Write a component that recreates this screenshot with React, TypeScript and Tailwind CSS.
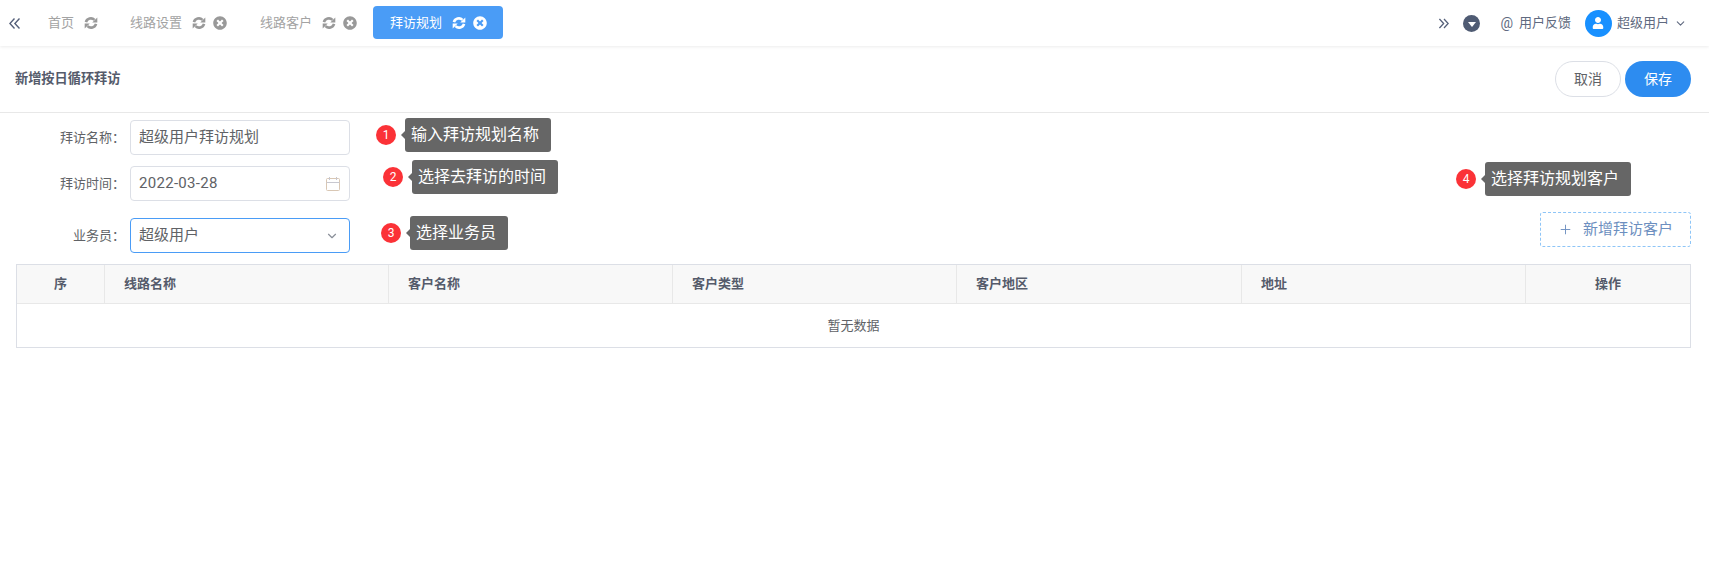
import { ChevronDown, Plus } from "lucide-react";
import { FaTimesCircle, FaUser } from "react-icons/fa";

const font = "font-['Roboto','Noto_Sans_CJK_SC',sans-serif]";

const SyncIcon = ({ className }: { className: string }) => (
  <svg viewBox="0 0 16 16" className={className} fill="currentColor">
    <path d="M2.2 7A5.9 5.9 0 0 1 12 4.4" fill="none" stroke="currentColor" strokeWidth="3" />
    <path d="M9.4 7.4h5.8V1.6z" />
    <path d="M13.8 9A5.9 5.9 0 0 1 4 11.6" fill="none" stroke="currentColor" strokeWidth="3" />
    <path d="M6.6 8.6H.8v5.8z" />
  </svg>
);

const DoubleChevron = ({ left, className }: { left?: boolean; className: string }) => (
  <svg viewBox="0 0 11 11" className={className} fill="none" stroke="#55607a" strokeWidth="1.4">
    <path d={left ? "M5.5 .5 .9 5.5l4.6 5M10.5 .5 5.9 5.5l4.6 5" : "M.5 .5l4.6 5-4.6 5M5.5 .5l4.6 5-4.6 5"} />
  </svg>
);

const Tab = ({ label, closable, width }: { label: string; closable?: boolean; width: string }) => (
  <div className={`flex h-[33px] shrink-0 items-center whitespace-nowrap text-[13px] text-[#a3a3a3] ${width}`}>
    <span className="ml-[17px]">{label}</span>
    <SyncIcon className="ml-[10px] h-[14px] w-[14px] text-[#999]" />
    {closable && <FaTimesCircle className="ml-[7px] h-[14px] w-[14px] text-[#999]" />}
  </div>
);

const Note = ({ n, text, className }: { n: number; text: string; className: string }) => (
  <div className={`absolute flex items-center ${className}`}>
    <span className="flex h-[20px] w-[20px] items-center justify-center rounded-full bg-[#fb3237] text-[12px] text-white">{n}</span>
    <span className="ml-[5px] h-0 w-0 border-y-[4px] border-r-[4px] border-y-transparent border-r-[#666]" />
    <span className="flex h-[34px] items-center rounded-[3px] bg-[#666] pl-[6px] pr-[12px] text-[16px] text-white">{text}</span>
  </div>
);

const Calendar = () => (
  <svg viewBox="0 0 16 16" className="h-[16px] w-[16px]" fill="none" stroke="#d9c7b4" strokeWidth="1">
    <rect x="1.5" y="2.5" width="13" height="12" rx="1" />
    <path d="M1.5 6.5h13M4.5 1v3M11.5 1v3" stroke="#c8c8d0" />
  </svg>
);

const Field = ({ label, children, className }: { label: string; children: React.ReactNode; className: string }) => (
  <div className={`flex items-center ${className}`}>
    <label className="mr-[5px] w-[125px] text-right text-[13px] text-[#606266]">{label}：</label>
    {children}
  </div>
);

const columns = [
  { name: "序", w: "w-[88px]", cls: "justify-center" },
  { name: "线路名称", w: "w-[284px]", cls: "pl-[19px]" },
  { name: "客户名称", w: "w-[284px]", cls: "pl-[19px]" },
  { name: "客户类型", w: "w-[284px]", cls: "pl-[19px]" },
  { name: "客户地区", w: "w-[285px]", cls: "pl-[19px]" },
  { name: "地址", w: "w-[284px]", cls: "pl-[19px]" },
  { name: "操作", w: "flex-1", cls: "justify-center" },
];

export default function App() {
  return (
    <div className={`relative h-[588px] w-[1709px] overflow-hidden bg-white ${font}`}>
      <header className="flex h-[46px] items-center shadow-[0_1px_3px_rgba(0,0,0,0.08)]">
        <DoubleChevron left className="ml-[9px] h-[11px] w-[11px]" />
        <div className="ml-[11px] flex items-center">
          <Tab label="首页" width="w-[82px]" />
          <Tab label="线路设置" closable width="w-[130px]" />
          <Tab label="线路客户" closable width="w-[130px]" />
          <div className="-mt-[1px] flex h-[33px] w-[130px] shrink-0 items-center whitespace-nowrap rounded-[4px] bg-[#4a9cf6] text-[13px] text-white">
            <span className="ml-[17px]">拜访规划</span>
            <SyncIcon className="ml-[10px] h-[14px] w-[14px]" />
            <FaTimesCircle className="ml-[7px] h-[14px] w-[14px]" />
          </div>
        </div>
        <div className="ml-auto flex items-center text-[13px] text-[#606a80]">
          <DoubleChevron className="h-[11px] w-[10px]" />
          <span className="ml-[14px] flex h-[17px] w-[17px] items-center justify-center rounded-full bg-[#4f5b73]">
            <span className="mt-[2px] h-0 w-0 border-x-[4px] border-t-[5px] border-x-transparent border-t-white" />
          </span>
          <span className="ml-[20px] text-[14px]">@</span>
          <span className="ml-[6px]">用户反馈</span>
          <span className="ml-[14px] flex h-[27px] w-[27px] items-center justify-center rounded-full bg-[#1890ff]">
            <FaUser className="h-[12px] w-[12px] text-white" />
          </span>
          <span className="ml-[5px]">超级用户</span>
          <ChevronDown className="ml-[5px] mr-[22px] h-[13px] w-[13px]" />
        </div>
      </header>

      <div className="flex h-[67px] items-center justify-between border-b border-[#e8e8e8] pl-[15px] pr-[18px]">
        <h1 className="text-[13.2px] font-bold text-[#555b6b]">新增按日循环拜访</h1>
        <div className="flex gap-[4px] text-[14px]">
          <button className="h-[36px] w-[66px] rounded-full border border-[#dcdfe6] text-[#606266]">取消</button>
          <button className="h-[36px] w-[66px] rounded-full bg-[#2d8cf0] text-white">保存</button>
        </div>
      </div>

      <div className="relative">
        <Field label="拜访名称" className="pt-[7px]">
          <div className="flex h-[35px] w-[220px] items-center rounded-[4px] border border-[#dcdfe6] px-[8px] text-[15px] text-[#606266]">超级用户拜访规划</div>
        </Field>
        <Field label="拜访时间" className="pt-[11px]">
          <div className="flex h-[35px] w-[220px] items-center justify-between rounded-[4px] border border-[#dcdfe6] px-[8px] text-[15px] text-[#606266]">
            <span className="tracking-[0.3px]">2022-03-28</span>
            <Calendar />
          </div>
        </Field>
        <div className="flex items-start justify-between pr-[18px] pt-[17px]">
          <Field label="业务员" className="">
            <div className="flex h-[35px] w-[220px] items-center justify-between rounded-[4px] border border-[#4a9cf6] pl-[8px] pr-[10px] text-[15px] text-[#606266]">
              超级用户
              <ChevronDown className="h-[14px] w-[14px] text-[#8a8f99]" />
            </div>
          </Field>
          <button className="-mt-[6px] flex h-[35px] w-[151px] items-center justify-center rounded-[3px] border border-dashed border-[#8ec5f7] text-[15px] text-[#6d8fc0]">
            <Plus className="mr-[10px] h-[15px] w-[15px]" strokeWidth={1.5} />
            新增拜访客户
          </button>
        </div>
      </div>

      <div className="ml-[16px] mr-[18px] mt-[11px] border border-[#dcdfe6] text-[13px] text-[#606266]">
        <div className="flex h-[38px] bg-[#f8f8f8] font-bold text-[13px] text-[#555b6b]">
          {columns.map((c, i) => (
            <div key={c.name} className={`flex items-center ${c.w} ${c.cls} ${i < columns.length - 1 ? "border-r border-[#e8e8e8]" : ""}`}>{c.name}</div>
          ))}
        </div>
        <div className="flex h-[44px] items-center justify-center border-t border-[#e8e8e8]">暂无数据</div>
      </div>

      <Note n={1} text="输入拜访规划名称" className="left-[376px] top-[118px]" />
      <Note n={2} text="选择去拜访的时间" className="left-[383px] top-[160px]" />
      <Note n={3} text="选择业务员" className="left-[381px] top-[216px]" />
      <Note n={4} text="选择拜访规划客户" className="left-[1456px] top-[162px]" />
    </div>
  );
}
